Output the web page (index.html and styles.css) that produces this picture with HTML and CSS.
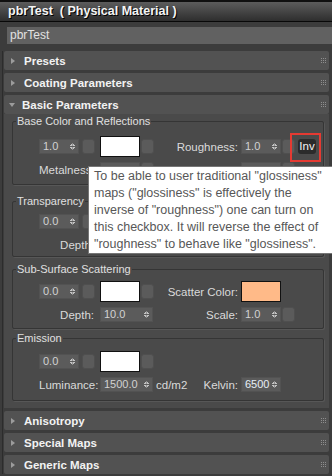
FILE: index.html
```html
<!DOCTYPE html>
<html lang="en">
<head>
    <meta charset="UTF-8">
    <title>pbrTest ( Physical Material )</title>
    <link rel="stylesheet" href="styles.css">
</head>
<body>
    <div class="titlebar">pbrTest&nbsp; ( Physical Material )</div>
    <div class="namebar">pbrTest</div>

    <div class="rollouts">
        <div class="rollout">
            <div class="rhead"><span class="tri"></span>Presets
                <svg class="grip" width="5" height="5" viewBox="0 0 5 5"><path d="M0 0h1v1H0zM2 0h1v1H2zM4 0h1v1H4zM0 2h1v1H0zM2 2h1v1H2zM4 2h1v1H4zM0 4h1v1H0zM2 4h1v1H2zM4 4h1v1H4z"/></svg>
            </div>
        </div>
        <div class="rollout">
            <div class="rhead"><span class="tri"></span>Coating Parameters
                <svg class="grip" width="5" height="5" viewBox="0 0 5 5"><path d="M0 0h1v1H0zM2 0h1v1H2zM4 0h1v1H4zM0 2h1v1H0zM2 2h1v1H2zM4 2h1v1H4zM0 4h1v1H0zM2 4h1v1H2zM4 4h1v1H4z"/></svg>
            </div>
        </div>
        <div class="rollout open">
            <div class="rhead"><span class="tri"></span>Basic Parameters
                <svg class="grip" width="5" height="5" viewBox="0 0 5 5"><path d="M0 0h1v1H0zM2 0h1v1H2zM4 0h1v1H4zM0 2h1v1H0zM2 2h1v1H2zM4 2h1v1H4zM0 4h1v1H0zM2 4h1v1H2zM4 4h1v1H4z"/></svg>
            </div>
            <div class="rbody">
                <fieldset class="group g-base">
                    <legend>Base Color and Reflections</legend>
                    <div class="row">
                        <div class="spin">1.0</div>
                        <div class="btn"></div>
                        <div class="swatch"></div>
                        <div class="btn"></div>
                        <div class="lbl">Roughness:</div>
                        <div class="spin">1.0</div>
                        <div class="btn"></div>
                        <div class="inv-cell"><div class="inv">Inv</div></div>
                    </div>
                    <div class="row">
                        <div class="lbl left">Metalness:</div>
                        <div class="spin"></div>
                        <div class="btn"></div>
                        <div class="lbl"></div>
                        <div class="spin"></div>
                        <div class="btn"></div>
                    </div>
                </fieldset>

                <fieldset class="group g-trans">
                    <legend>Transparency</legend>
                    <div class="row">
                        <div class="spin">0.0</div>
                        <div class="btn"></div>
                        <div class="swatch"></div>
                        <div class="btn"></div>
                    </div>
                    <div class="row">
                        <div class="lbl left">Depth:</div>
                        <div class="spin wide"></div>
                    </div>
                </fieldset>

                <fieldset class="group g-sss">
                    <legend>Sub-Surface Scattering</legend>
                    <div class="row">
                        <div class="spin">0.0</div>
                        <div class="btn"></div>
                        <div class="swatch"></div>
                        <div class="btn"></div>
                        <div class="lbl">Scatter Color:</div>
                        <div class="swatch peach"></div>
                    </div>
                    <div class="row">
                        <div class="lbl left">Depth:</div>
                        <div class="spin wide">10.0</div>
                        <div class="lbl">Scale:</div>
                        <div class="spin">1.0</div>
                        <div class="btn"></div>
                    </div>
                </fieldset>

                <fieldset class="group g-emit">
                    <legend>Emission</legend>
                    <div class="row">
                        <div class="spin">0.0</div>
                        <div class="btn"></div>
                        <div class="swatch"></div>
                        <div class="btn"></div>
                    </div>
                    <div class="row">
                        <div class="lbl left">Luminance:</div>
                        <div class="spin wide">1500.0</div>
                        <div class="lbl split"><span>cd/m2</span><span>Kelvin:</span></div>
                        <div class="spin kelvin">6500</div>
                    </div>
                </fieldset>
            </div>
        </div>
        <div class="rollout">
            <div class="rhead"><span class="tri"></span>Anisotropy
                <svg class="grip" width="5" height="5" viewBox="0 0 5 5"><path d="M0 0h1v1H0zM2 0h1v1H2zM4 0h1v1H4zM0 2h1v1H0zM2 2h1v1H2zM4 2h1v1H4zM0 4h1v1H0zM2 4h1v1H2zM4 4h1v1H4z"/></svg>
            </div>
        </div>
        <div class="rollout">
            <div class="rhead"><span class="tri"></span>Special Maps
                <svg class="grip" width="5" height="5" viewBox="0 0 5 5"><path d="M0 0h1v1H0zM2 0h1v1H2zM4 0h1v1H4zM0 2h1v1H0zM2 2h1v1H2zM4 2h1v1H4zM0 4h1v1H0zM2 4h1v1H2zM4 4h1v1H4z"/></svg>
            </div>
        </div>
        <div class="rollout">
            <div class="rhead"><span class="tri"></span>Generic Maps
                <svg class="grip" width="5" height="5" viewBox="0 0 5 5"><path d="M0 0h1v1H0zM2 0h1v1H2zM4 0h1v1H4zM0 2h1v1H0zM2 2h1v1H2zM4 2h1v1H4zM0 4h1v1H0zM2 4h1v1H2zM4 4h1v1H4z"/></svg>
            </div>
        </div>
    </div>

    <div class="tooltip">
        To be able to user traditional "glossiness"<br>
        maps ("glossiness" is effectively the<br>
        inverse of "roughness") one can turn on<br>
        this checkbox. It will reverse the effect of<br>
        "roughness" to behave like "glossiness".
    </div>
</body>
</html>
```
FILE: styles.css
```css
body {
    margin: 0;
    width: 332px;
    height: 476px;
    overflow: hidden;
    position: relative;
    background-color: #3c3c3c;
    font-family: "Liberation Sans", Arial, sans-serif;
    font-size: 11px;
    color: #dadada;
}

.titlebar {
    height: 19px;
    line-height: 19px;
    border-top: 2px solid #101010;
    border-bottom: 1px solid #080808;
    background: linear-gradient(#5c5c5c, #2e2e2e);
    padding-left: 8px;
    color: #f4f4f4;
    font-weight: bold;
    font-size: 12.5px;
    text-shadow: 1px 1px 0 #000;
}

.namebar {
    margin: 5px 0 0 7px;
    height: 17px;
    line-height: 17px;
    padding-left: 3px;
    background-color: #616161;
    color: #e2e2e2;
    font-size: 12px;
}

.rollouts {
    margin: 7px 0 0 2px;
    padding: 0 3px 0 1px;
    border-left: 1px solid #2c2c2c;
}

.rollout {
    margin-bottom: 3px;
}

.rhead {
    display: flex;
    align-items: center;
    height: 19px;
    background-color: #525252;
    border-radius: 2px;
    color: #f2f2f2;
    font-weight: bold;
    font-size: 11.5px;
}

.tri {
    width: 0;
    height: 0;
    margin: 0 9px 0 7px;
    border-top: 3px solid transparent;
    border-bottom: 3px solid transparent;
    border-left: 4px solid #9c9c9c;
}

.open .tri {
    margin: 0 7px 0 5px;
    border-left: 3px solid transparent;
    border-right: 3px solid transparent;
    border-top: 4px solid #9c9c9c;
    border-bottom: 0;
}

.grip {
    margin-left: auto;
    margin-right: 3px;
    fill: #8e8e8e;
}

.rbody {
    background-color: #4a4a4a;
    padding: 1px 5px 7px 8px;
}

.group {
    margin: 0;
    padding: 0 0 0 26px;
    border: 1px solid #353535;
    border-radius: 2px;
    box-shadow: 1px 1px 0 #575757;
}

.group legend {
    margin-left: -23px;
    padding: 0 1px;
    line-height: 13px;
    color: #e0e0e0;
}

.g-base { padding-top: 8px; padding-bottom: 4px; }
.g-trans { margin-top: 10px; padding-top: 3px; padding-bottom: 1px; }
.g-sss { margin-top: 6px; padding-top: 5px; padding-bottom: 3px; }
.g-emit { margin-top: 3px; padding-top: 6px; padding-bottom: 5px; }

.row {
    display: grid;
    grid-template-columns: 43px 18px 41px 15px 85px 41px 16px 22px;
    align-items: center;
    height: 21px;
}

.row + .row {
    margin-top: 2px;
}

.spin {
    position: relative;
    width: 40px;
    height: 15px;
    line-height: 13px;
    box-sizing: border-box;
    padding-left: 3px;
    background-color: #5b5b5b;
    border: 1px solid #525252;
    color: #d2d2d2;
    font-size: 11px;
}

.spin::after {
    content: "";
    position: absolute;
    right: 3px;
    top: 3px;
    width: 5px;
    height: 7px;
    background:
        linear-gradient(to bottom right, transparent 50%, #c4c4c4 50%) left top / 50% 3px no-repeat,
        linear-gradient(to bottom left, transparent 50%, #c4c4c4 50%) right top / 50% 3px no-repeat,
        linear-gradient(to top right, transparent 50%, #c4c4c4 50%) left bottom / 50% 3px no-repeat,
        linear-gradient(to top left, transparent 50%, #c4c4c4 50%) right bottom / 50% 3px no-repeat;
}

.spin.wide {
    grid-column: span 2;
    width: 53px;
}

.spin.kelvin {
    color: #e6eef6;
}

.btn {
    width: 13px;
    height: 15px;
    box-sizing: border-box;
    background-color: #5b5b5b;
    border: 1px solid #4f4f4f;
    border-radius: 3px;
}

.swatch {
    width: 40px;
    height: 21px;
    box-sizing: border-box;
    background-color: #fff;
    border: 1px solid #111;
}

.swatch.peach {
    background-color: #ffba88;
}

.lbl {
    text-align: right;
    padding-right: 3px;
    white-space: nowrap;
    font-size: 11.5px;
}

.lbl.left {
    grid-column: 1 / span 2;
    padding-right: 6px;
}

.lbl.split {
    display: flex;
    justify-content: space-between;
}

.inv-cell {
    position: relative;
}

.inv {
    width: 18px;
    height: 15px;
    line-height: 15px;
    text-align: center;
    background-color: #2b2b2b;
    border-radius: 3px;
    color: #f4f4f4;
    font-size: 11.5px;
}

.inv-cell::after {
    content: "";
    position: absolute;
    left: -8px;
    top: -6px;
    width: 27px;
    height: 25px;
    border: 2px solid #e53a32;
}

.tooltip {
    position: absolute;
    left: 88px;
    top: 166px;
    width: 300px;
    height: 85px;
    padding: 1px 0 0 5px;
    background-color: #fff;
    border: 1px solid #767676;
    color: #575757;
    font-size: 12.5px;
    line-height: 17px;
    white-space: nowrap;
}
```
